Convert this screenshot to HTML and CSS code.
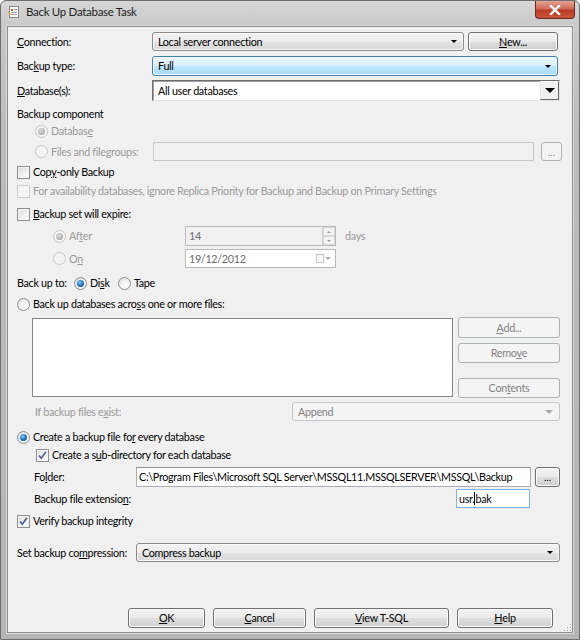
FILE: index.html
```html
<!DOCTYPE html>
<html lang="en">
<head>
    <meta charset="UTF-8">
    <title>Back Up Database Task</title>
    <link rel="stylesheet" href="styles.css">
</head>
<body>
    <div class="window">
        <div class="titlebar">
            <svg class="title-icon" width="14" height="14" viewBox="0 0 14 14">
                <rect x="2.5" y="1.5" width="9" height="11" fill="#fff" stroke="#8a8a8a"/>
                <rect x="4" y="4" width="2" height="2" fill="#d84a2a"/>
                <rect x="7" y="4" width="3" height="1" fill="#9a9a9a"/>
                <rect x="4" y="7" width="6" height="1" fill="#9a9a9a"/>
                <rect x="4" y="9" width="6" height="1" fill="#9a9a9a"/>
                <path d="M1 6 L4 9 L2 11 Z" fill="#e8a030"/>
            </svg>
            <span class="title">Back Up Database Task</span>
            <div class="close-btn">
                <svg width="12" height="10" viewBox="0 0 12 10">
                    <path d="M2 1 L10 9 M10 1 L2 9" stroke="#fff" stroke-width="2.4" stroke-linecap="square"/>
                </svg>
            </div>
        </div>

        <div class="client">
            <!-- connection / type / databases -->
            <div class="row row-conn">
                <span class="label lbl-135"><u>C</u>onnection:</span>
                <div class="combo combo-conn">Local server connection<span class="arrow"></span></div>
                <div class="btn btn-new"><u>N</u>ew...</div>
            </div>
            <div class="row row-type">
                <span class="label lbl-135">Bac<u>k</u>up type:</span>
                <div class="combo combo-hot">Full<span class="arrow"></span></div>
            </div>
            <div class="row row-db">
                <span class="label lbl-135"><u>D</u>atabase(s):</span>
                <div class="dropbox">
                    <span class="dropbox-text">All user databases</span>
                    <span class="dropbox-btn"><span class="arrow-big"></span></span>
                </div>
            </div>

            <!-- backup component -->
            <div class="row row-comp">
                <span class="label">Backup component</span>
            </div>
            <div class="row row-comp-db indent">
                <span class="radio disabled checked"></span>
                <span class="label muted">Databas<u>e</u></span>
            </div>
            <div class="row row-files indent">
                <span class="radio disabled"></span>
                <span class="label muted lbl-files">Files and filegroups:</span>
                <div class="textbox textbox-disabled files-box"></div>
                <div class="btn btn-disabled btn-dots">...</div>
            </div>

            <div class="row row-copy">
                <span class="check"></span>
                <span class="label">Cop<u>y</u>-only Backup</span>
            </div>
            <div class="row row-avail">
                <span class="check disabled"></span>
                <span class="label muted">For availability databases, ignore Replica Priority for Backup and Backup on Primary Settings</span>
            </div>

            <!-- expiry -->
            <div class="row row-expire">
                <span class="check"></span>
                <span class="label"><u>B</u>ackup set will expire:</span>
            </div>
            <div class="row row-after indent-2">
                <span class="radio disabled checked"></span>
                <span class="label muted lbl-after">Af<u>t</u>er</span>
                <div class="textbox textbox-disabled spin-box">
                    <span class="spin-text">14</span>
                    <span class="spin">
                        <span class="spin-up"></span>
                        <span class="spin-down"></span>
                    </span>
                </div>
                <span class="label muted days">days</span>
            </div>
            <div class="row row-on indent-2">
                <span class="radio disabled"></span>
                <span class="label muted lbl-after">O<u>n</u></span>
                <div class="textbox date-box">
                    <span class="spin-text">19/12/2012</span>
                    <span class="cal-icon"></span>
                    <span class="arrow arrow-muted"></span>
                </div>
            </div>

            <!-- destination -->
            <div class="row row-to">
                <span class="label lbl-to">Back up to:</span>
                <span class="radio checked"></span>
                <span class="label lbl-disk">Di<u>s</u>k</span>
                <span class="radio"></span>
                <span class="label">Tape</span>
            </div>
            <div class="row row-across">
                <span class="radio"></span>
                <span class="label">Back up databases acro<u>s</u>s one or more files:</span>
            </div>
            <div class="row row-list">
                <div class="listbox"></div>
                <div class="list-buttons">
                    <div class="btn btn-disabled btn-add"><u>A</u>dd...</div>
                    <div class="btn btn-disabled btn-remove">Remo<u>v</u>e</div>
                    <div class="btn btn-disabled btn-contents">Con<u>t</u>ents</div>
                </div>
            </div>
            <div class="row row-exist">
                <span class="label muted lbl-exist">If backup files e<u>x</u>ist:</span>
                <div class="combo combo-disabled">Append<span class="arrow arrow-muted"></span></div>
            </div>

            <div class="row row-every">
                <span class="radio checked"></span>
                <span class="label">Create a backup file fo<u>r</u> every database</span>
            </div>
            <div class="row row-subdir">
                <span class="check checked">
                    <svg width="11" height="11" viewBox="0 0 11 11"><path d="M2 5.5 L4.3 8.2 L9 1.8" fill="none" stroke="#4a5f97" stroke-width="1.6"/></svg>
                </span>
                <span class="label">Create a s<u>u</u>b-directory for each database</span>
            </div>
            <div class="row row-folder">
                <span class="label lbl-folder">Fo<u>l</u>der:</span>
                <div class="textbox folder-box">C:\Program Files\Microsoft SQL Server\MSSQL11.MSSQLSERVER\MSSQL\Backup</div>
                <div class="btn btn-dots btn-dots-folder">...</div>
            </div>
            <div class="row row-ext">
                <span class="label lbl-ext">Backup file extensio<u>n</u>:</span>
                <div class="textbox ext-box">usr.<span class="caret"></span>bak</div>
            </div>

            <div class="row row-verify">
                <span class="check checked">
                    <svg width="11" height="11" viewBox="0 0 11 11"><path d="M2 5.5 L4.3 8.2 L9 1.8" fill="none" stroke="#4a5f97" stroke-width="1.6"/></svg>
                </span>
                <span class="label">Verify backup integrity</span>
            </div>

            <div class="row row-compress">
                <span class="label lbl-compress">Set backup co<u>m</u>pression:</span>
                <div class="combo combo-compress">Compress backup<span class="arrow"></span></div>
            </div>

            <div class="row row-actions">
                <div class="btn btn-ok"><u>O</u>K</div>
                <div class="btn btn-cancel"><u>C</u>ancel</div>
                <div class="btn btn-tsql"><u>V</u>iew T-SQL</div>
                <div class="btn btn-help"><u>H</u>elp</div>
            </div>

            <div class="grip"></div>
        </div>
    </div>
</body>
</html>
```

FILE: styles.css
```css
* {
    margin: 0;
    padding: 0;
    box-sizing: border-box;
}

body {
    font-family: 'Lato', 'Noto Sans', sans-serif;
    font-size: 10.75px;
    letter-spacing: -0.3px;
    color: #000;
    background: #fff;
}

u {
    text-decoration: underline;
    text-underline-offset: 1px;
}

/* window frame */
.window {
    width: 580px;
    height: 640px;
    display: flex;
    flex-direction: column;
    border: 1px solid #6e6e6e;
    border-radius: 6px 6px 0 0;
    background: linear-gradient(to bottom, #d6d6d6 0px, #c9c9c9 25px, #bcbcbc 120px, #b4b4b4 100%);
}

.titlebar {
    height: 25px;
    display: flex;
    align-items: flex-start;
    padding-left: 6px;
}

.title-icon {
    margin-top: 4px;
}

.title {
    margin-top: 4px;
    margin-left: 5px;
    font-size: 11.5px;
    color: #1e1e1e;
}

.close-btn {
    margin-left: auto;
    margin-right: 4px;
    width: 40px;
    height: 18px;
    border: 1px solid #6b2a22;
    border-top: none;
    border-radius: 0 0 4px 4px;
    background: linear-gradient(to bottom, #e4a394 0%, #d06a58 45%, #bb3b26 55%, #c7553c 100%);
    display: flex;
    align-items: center;
    justify-content: center;
}

.client {
    position: relative;
    flex: 1;
    margin: 0 6px 6px 6px;
    background: #f0f0f0;
    border: 1px solid #8c8c8c;
    box-shadow: 0 0 0 1px #dadada;
    padding: 0 12px 0 9px;
}

.grip {
    position: absolute;
    right: 1px;
    bottom: 1px;
    width: 8px;
    height: 8px;
    background:
        radial-gradient(circle, #a8a8a8 0.8px, transparent 1px) 0 0 / 3px 3px;
    clip-path: polygon(100% 0, 100% 100%, 0 100%);
}

/* rows */
.row {
    display: flex;
    align-items: center;
    white-space: nowrap;
}

.indent { padding-left: 18px; }
.indent-2 { padding-left: 36px; }

.row-conn { margin-top: 5px; height: 19px; }
.row-type { margin-top: 5px; height: 20px; }
.row-db { margin-top: 4px; height: 21px; }
.row-comp { margin-top: 6px; height: 14px; }
.row-comp-db { margin-top: 3px; height: 14px; }
.row-files { margin-top: 4px; height: 19px; }
.row-copy { margin-top: 4px; height: 14px; }
.row-avail { margin-top: 5px; height: 14px; }
.row-expire { margin-top: 9px; height: 14px; }
.row-after { margin-top: 5px; height: 20px; }
.row-on { margin-top: 3px; height: 19px; }
.row-to { margin-top: 8px; height: 14px; }
.row-across { margin-top: 7px; height: 14px; }
.row-list { margin-top: 6px; height: 81px; align-items: flex-start; padding-left: 15px; }
.row-exist { margin-top: 4px; height: 19px; padding-left: 18px; }
.row-every { margin-top: 9px; height: 14px; }
.row-subdir { margin-top: 4px; height: 14px; padding-left: 19px; }
.row-folder { margin-top: 4px; height: 21px; padding-left: 17px; }
.row-ext { margin-top: 2px; height: 19px; padding-left: 17px; }
.row-verify { margin-top: 6px; height: 14px; }
.row-compress { margin-top: 15px; height: 19px; }
.row-actions { margin-top: 45px; height: 21px; padding-left: 111px; gap: 8px; }

/* labels */
.label {
    line-height: 14px;
}

.muted {
    color: #9b9b9b;
}

.lbl-135 { width: 135px; flex: none; }
.lbl-files { width: 102px; flex: none; }
.lbl-after { width: 116px; flex: none; }
.lbl-to { width: 57px; flex: none; }
.lbl-disk { width: 28px; flex: none; }
.lbl-exist { width: 257px; flex: none; }
.lbl-folder { width: 102px; flex: none; }
.lbl-ext { width: 422px; flex: none; }
.lbl-compress { width: 119px; flex: none; }

.days { margin-left: 9px; }

/* radio buttons */
.radio {
    flex: none;
    width: 13px;
    height: 13px;
    margin-right: 3px;
    border-radius: 50%;
    border: 1px solid #8e8f8f;
    background: radial-gradient(circle at 60% 65%, #ffffff 0%, #f4f4f4 40%, #d6d6d6 100%);
    display: flex;
    align-items: center;
    justify-content: center;
}

.radio.checked::after {
    content: '';
    width: 7px;
    height: 7px;
    border-radius: 50%;
    background: radial-gradient(circle at 40% 35%, #8ad0f4 0%, #2b7dc1 45%, #0d3a76 100%);
}

.radio.disabled {
    border-color: #c7c7c7;
    background: #f4f4f4;
}

.radio.disabled.checked::after {
    background: radial-gradient(circle at 40% 35%, #dcdcdc 0%, #b4b4b4 60%, #a0a0a0 100%);
}

/* checkboxes */
.check {
    flex: none;
    width: 13px;
    height: 13px;
    margin-right: 3px;
    border: 1px solid #8e8f8f;
    background: linear-gradient(135deg, #dcdcdc 0%, #f0f0f0 55%, #ffffff 100%);
    box-shadow: inset 0 0 0 1px #f4f4f4;
    display: flex;
    align-items: center;
    justify-content: center;
}

.check svg {
    display: block;
}

.check.disabled {
    border-color: #cdcdcd;
    background: #f4f4f4;
    box-shadow: none;
}

/* buttons */
.btn {
    flex: none;
    height: 20px;
    border: 1px solid #707070;
    border-radius: 3px;
    background: linear-gradient(to bottom, #f2f2f2 0%, #ebebeb 50%, #dddddd 51%, #cfcfcf 100%);
    box-shadow: inset 0 0 0 1px #fbfbfb;
    display: flex;
    align-items: center;
    justify-content: center;
    line-height: 14px;
}

.btn-disabled {
    border-color: #adb2b5;
    background: #f4f4f4;
    box-shadow: none;
    color: #838383;
}

.btn-new { width: 90px; height: 19px; margin-left: 4px; }
.btn-dots { width: 21px; height: 19px; margin-left: 7px; font-size: 10px; letter-spacing: 0; color: #838383; }
.btn-dots-folder { width: 25px; margin-left: 4px; color: #000; height: 20px; }

.btn-ok { width: 77px; }
.btn-cancel { width: 93px; }
.btn-tsql { width: 135px; }
.btn-help { width: 96px; }

.list-buttons {
    margin-left: 5px;
    display: flex;
    flex-direction: column;
}

.list-buttons .btn { width: 102px; }
.btn-add { height: 21px; }
.btn-remove { margin-top: 5px; }
.btn-contents { margin-top: 15px; }

/* combo boxes */
.combo {
    position: relative;
    height: 19px;
    border: 1px solid #8a8a8a;
    border-radius: 3px;
    background: linear-gradient(to bottom, #f3f3f3 0%, #ececec 50%, #e2e2e2 51%, #d9d9d9 100%);
    box-shadow: inset 0 0 0 1px #fafafa;
    display: flex;
    align-items: center;
    padding-left: 5px;
    line-height: 14px;
}

.combo-conn { width: 312px; }

.combo-hot {
    width: 406px;
    height: 20px;
    border-color: #3c7fb1;
    background: linear-gradient(to bottom, #eaf6fd 0%, #d9f0fc 50%, #bee6fd 51%, #a7d9f5 100%);
    box-shadow: inset 0 0 0 1px #f4fbfe;
}

.combo-disabled {
    width: 268px;
    border-color: #c4c8cb;
    background: #f4f4f4;
    box-shadow: none;
    color: #838383;
}

.combo-compress { width: 424px; }

.arrow {
    margin-left: auto;
    margin-right: 6px;
    width: 0;
    height: 0;
    border-left: 3px solid transparent;
    border-right: 3px solid transparent;
    border-top: 3px solid #000;
}

.arrow-muted {
    border-left-width: 4px;
    border-right-width: 4px;
    border-top: 4px solid #a9a9a9;
}

.dropbox {
    width: 408px;
    height: 21px;
    display: flex;
    background: #fff;
    border: 1px solid;
    border-color: #6d6d6d #e3e3e3 #e3e3e3 #6d6d6d;
    box-shadow: inset 1px 1px 0 #a0a0a0;
}

.dropbox-text {
    flex: 1;
    padding-left: 5px;
    line-height: 19px;
}

.dropbox-btn {
    width: 19px;
    height: 19px;
    background: #f0f0f0;
    border: 1px solid;
    border-color: #ffffff #696969 #696969 #e3e3e3;
    display: flex;
    align-items: center;
    justify-content: center;
}

.arrow-big {
    width: 0;
    height: 0;
    border-left: 5px solid transparent;
    border-right: 5px solid transparent;
    border-top: 5px solid #000;
}

/* text boxes */
.textbox {
    flex: none;
    height: 19px;
    background: #fff;
    border: 1px solid #abadb3;
    border-top-color: #8e9398;
    display: flex;
    align-items: center;
    padding-left: 3px;
    line-height: 14px;
}

.textbox-disabled {
    background: #f0f0f0;
    border-color: #c9c9c9;
    color: #6d6d6d;
}

.files-box { width: 381px; }

.spin-box {
    width: 151px;
    height: 20px;
    border-color: #b9b9b9;
}

.spin-text {
    flex: 1;
}

.spin {
    width: 13px;
    height: 18px;
    margin-right: 0;
    border-left: 1px solid #d0d0d0;
    display: flex;
    flex-direction: column;
}

.spin-up, .spin-down {
    flex: 1;
    display: flex;
    align-items: center;
    justify-content: center;
    background: #f4f4f4;
    border: 1px solid #d6d6d6;
}

.spin-up::after {
    content: '';
    border-left: 2px solid transparent;
    border-right: 2px solid transparent;
    border-bottom: 2px solid #9a9a9a;
}

.spin-down::after {
    content: '';
    border-left: 2px solid transparent;
    border-right: 2px solid transparent;
    border-top: 2px solid #9a9a9a;
}

.date-box {
    width: 151px;
    border-color: #b9b9b9;
    color: #6d6d6d;
}

.cal-icon {
    width: 8px;
    height: 9px;
    border: 1px solid #c4c4c4;
    background: #f8f8f8;
    margin-right: 1px;
}

.date-box .arrow {
    margin-left: 0;
    margin-right: 4px;
    border-left-width: 3px;
    border-right-width: 3px;
    border-top-width: 3px;
}

.listbox {
    width: 421px;
    height: 79px;
    margin-top: 1px;
    background: #fff;
    border: 1px solid #828790;
}

.folder-box { width: 395px; padding-left: 2px; height: 20px; }

.ext-box {
    width: 74px;
    border-color: #7eb4ea;
    padding-left: 2px;
}

.caret {
    display: inline-block;
    width: 1px;
    height: 13px;
    background: #000;
}
```
